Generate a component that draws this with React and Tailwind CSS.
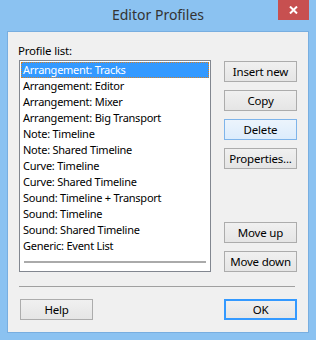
import React from "react";

const profiles = [
  "Arrangement: Tracks",
  "Arrangement: Editor",
  "Arrangement: Mixer",
  "Arrangement: Big Transport",
  "Note: Timeline",
  "Note: Shared Timeline",
  "Curve: Timeline",
  "Curve: Shared Timeline",
  "Sound: Timeline + Transport",
  "Sound: Timeline",
  "Sound: Shared Timeline",
  "Generic: Event List",
];

function Button({ children, variant = "normal", className = "" }) {
  const look =
    variant === "hover"
      ? "border-[#7eb4ea] bg-gradient-to-b from-[#ecf4fc] to-[#dcecfc]"
      : variant === "default"
      ? "border-[#3399ff] bg-gradient-to-b from-[#f0f0f0] to-[#e5e5e5] shadow-[inset_0_0_0_1px_#3399ff]"
      : "border-[#acacac] bg-gradient-to-b from-[#f0f0f0] to-[#e5e5e5]";
  return (
    <div
      className={`flex h-[21px] w-[73px] items-center justify-center border text-[11.5px] tracking-[-0.2px] text-black ${look} ${className}`}
    >
      {children}
    </div>
  );
}

export default function App() {
  return (
    <div
      className="flex h-[340px] w-[316px] flex-col bg-[#8bc2f1]"
      style={{ fontFamily: '"Noto Sans", "Open Sans", sans-serif' }}
    >
      {/* title bar */}
      <div className="relative flex h-[31px] items-center justify-center">
        <span className="text-[14px] leading-none text-[#333] -mt-[2px]">Editor Profiles</span>
        <div className="absolute right-[7px] top-0 flex h-[20px] w-[31px] items-center justify-center bg-[#c75050]">
          <svg width="9" height="8" viewBox="0 0 9 8">
            <path d="M1 0.5 L8 7.5 M8 0.5 L1 7.5" stroke="white" strokeWidth="2" />
          </svg>
        </div>
      </div>

      {/* client area */}
      <div className="mx-[7px] h-[302px] border border-[#78aee0]">
        <div className="flex h-[300px] flex-col bg-[#f0f0f0]">
          <div className="flex pl-[11px] pt-[10px]">
            <div className="flex w-[192px] flex-col">
              <div className="h-[18px] text-[11.5px] tracking-[-0.2px] leading-[18px] text-black -ml-px">Profile list:</div>
              <div className="h-[212px] border border-[#828790] bg-white p-px">
                {profiles.map((p, i) => (
                  <div
                    key={p}
                    className={`h-[16px] whitespace-nowrap pl-[2px] text-[11px] tracking-[-0.25px] ${
                      i === 0
                        ? "border border-dotted border-[#d0802a] bg-[#3399ff] pl-px text-white leading-[13px]"
                        : "text-black leading-[15px]"
                    }`}
                  >
                    {p}
                  </div>
                ))}
                <div className="flex h-[16px] items-center px-[3px]">
                  <div className="h-[2px] w-full bg-[#aaaaaa]" />
                </div>
              </div>
            </div>
            <div className="ml-[13px] mt-[19px] flex flex-col">
              <Button>Insert new</Button>
              <Button className="mt-[8px]">Copy</Button>
              <Button variant="hover" className="mt-[8px]">Delete</Button>
              <Button className="mt-[8px]">Properties...</Button>
              <Button className="mt-[53px]">Move up</Button>
              <Button className="mt-[8px]">Move down</Button>
            </div>
          </div>

          <div className="ml-[11px] mt-[14px] h-px w-[276px] bg-[#a0a0a0]" />

          <div className="mt-[12px] flex justify-between pl-[12px] pr-[11px]">
            <Button>Help</Button>
            <Button variant="default">OK</Button>
          </div>
        </div>
      </div>
    </div>
  );
}
